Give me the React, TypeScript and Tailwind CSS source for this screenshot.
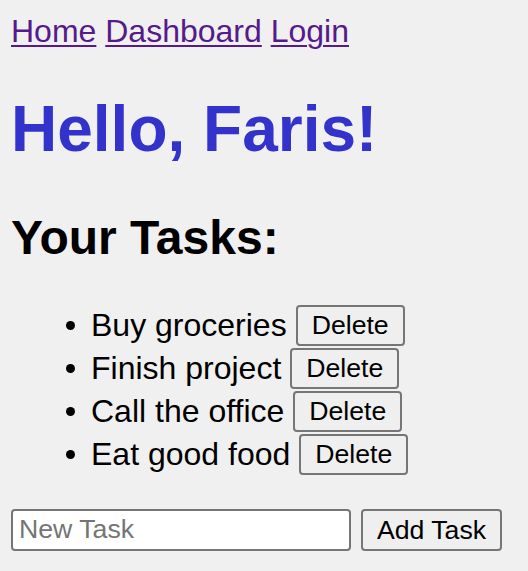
import { useState } from "react";

const initialTasks = ["Buy groceries", "Finish project", "Call the office", "Eat good food"];

export default function App() {
  const [tasks, setTasks] = useState<string[]>(initialTasks);
  const [draft, setDraft] = useState("");

  const addTask = () => {
    if (!draft.trim()) return;
    setTasks([...tasks, draft.trim()]);
    setDraft("");
  };

  return (
    <div className="min-h-screen bg-[#f0f0f0] pl-[11px] pt-[13px] font-['Liberation_Sans',Arial,sans-serif] text-black">
      <nav className="h-[37px] text-[32px] leading-[37px] text-[#551a8b]">
        <a href="#" className="underline decoration-2 underline-offset-[3px]">Home</a>{" "}
        <a href="#" className="underline decoration-2 underline-offset-[3px]">Dashboard</a>{" "}
        <a href="#" className="underline decoration-2 underline-offset-[3px]">Login</a>
      </nav>

      <h1 className="mt-[43px] text-[64px] font-bold leading-[73.5px] text-[#3333cc]">Hello, Faris!</h1>

      <h2 className="mt-[43px] text-[48px] font-bold leading-[55px]">Your Tasks:</h2>

      <ul className="mt-[39px] pl-[55px]">
        {tasks.map((task, i) => (
          <li key={task + i} className="flex h-[43px] items-center text-[32px]">
            <span className="mr-[16px] h-[9px] w-[9px] rounded-full bg-black" />
            <span className="leading-[37px]">{task}</span>
            <button
              type="button"
              onClick={() => setTasks(tasks.filter((_, j) => j !== i))}
              className="ml-[9px] h-[41px] rounded-[4px] border-2 border-[#767676] bg-[#efefef] px-[14px] text-[26.67px] leading-[30px]"
            >
              Delete
            </button>
          </li>
        ))}
      </ul>

      <div className="mt-[33px] flex items-center gap-[10px]">
        <input
          value={draft}
          onChange={(e) => setDraft(e.target.value)}
          placeholder="New Task"
          className="h-[42px] w-[340px] rounded-[4px] border-2 border-[#767676] bg-white pl-[6px] pr-[4px] text-[26.67px] placeholder:text-[#757575] outline-none"
        />
        <button
          type="button"
          onClick={addTask}
          className="h-[42px] w-[141px] rounded-[4px] border-2 border-[#767676] bg-[#efefef] text-[26.67px] leading-[30px]"
        >
          Add Task
        </button>
      </div>
    </div>
  );
}
